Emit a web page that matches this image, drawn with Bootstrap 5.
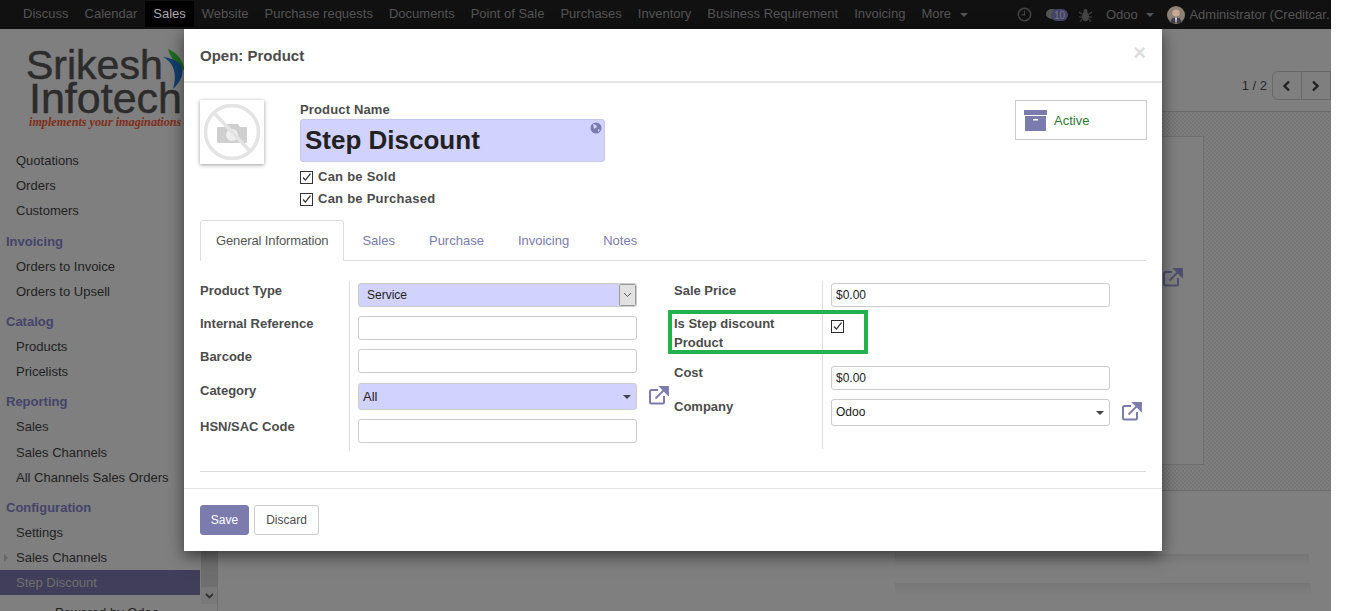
<!DOCTYPE html>
<html lang="en">
<head>
    <meta charset="UTF-8">
    <meta name="viewport" content="width=device-width, initial-scale=1.0">
    <title>Open: Product</title>
    <link href="https://cdn.jsdelivr.net/npm/bootstrap@5.3.0/dist/css/bootstrap.min.css" rel="stylesheet">
    <style>
        html, body { height: 611px; overflow: hidden; }
        body { background: #fff; font-family: "Liberation Sans", Arial, sans-serif; font-size: 13px; color: #4c4c4c; }

        /* page behind the dialog, colours already dimmed */
        .app-shell { width: 1331px; height: 611px; position: relative; overflow: hidden; background: #7f7f7f; color: #222; }
        .top-bar { height: 29px; background: #111; color: #555; white-space: nowrap; padding-left: 15px; }
        .top-item { padding: 0 8px; height: 26px; line-height: 26px; margin-top: 1px; }
        .top-item.on { background: #000; color: #aaa; }
        .top-right { margin-left: auto; width: 314px; flex: none; overflow: hidden; }
        .tb-gap-a { margin-left: 14px; }
        .tb-gap-b { margin-left: 11px; }
        .tb-gap-c { margin-left: 13px; }
        .caret-down { display: inline-block; width: 0; height: 0; border: 4px solid transparent; border-top-color: currentColor; border-bottom: 0; margin-left: 5px; vertical-align: middle; }

        .side-col { width: 218px; border-right: 1px solid #6e6e6e; height: 582px; flex: none; position: relative; }
        .side-scroll { width: 200px; flex: none; }
        .side-bar-track { width: 16px; height: 575px; background: #6e6e6e; position: relative; margin-left: 1px; flex: none; }
        .side-bar-btn { position: absolute; left: 0; bottom: 0; width: 16px; height: 17px; background: #797979; display: flex; align-items: center; justify-content: center; }
        .logo-box { height: 119px; padding: 19px 0 0 26px; position: relative; }
        .logo-big { line-height: 35px; color: #2c2c2c; -webkit-text-stroke: .5px #2c2c2c; white-space: nowrap; }
        .logo-a { font-size: 41px; }
        .logo-b { font-size: 43px; margin: -2px 0 0 3px; }
        .logo-sub { font-family: "Liberation Serif", serif; font-weight: bold; font-style: italic; font-size: 12.2px; line-height: 14px; color: #7f2c18; margin: -1px 0 0 3px; white-space: nowrap; }
        .logo-leaf { position: absolute; left: 163px; top: 20px; }
        .side-group { font-weight: bold; color: #45436a; padding-left: 6px; height: 25px; line-height: 25px; margin-top: 5px; }
        .side-link { padding-left: 16px; height: 25.2px; line-height: 25px; color: #222; position: relative; }
        .side-link.on { background: #403e5a; color: #6f6f6f; }
        .side-arrow { position: absolute; left: 4px; top: 9px; width: 0; height: 0; border: 4px solid transparent; border-left-color: #666; border-right: 0; }
        .side-foot { position: absolute; left: 55px; top: 574px; color: #222; white-space: nowrap; }

        .work-col { min-width: 0; }
        .panel-top { height: 83px; border-bottom: 1px solid #6b6b6b; padding: 42px 0 0 0; }
        .pager-text { margin-right: 5px; line-height: 29px; color: #2b2b2b; }
        .pager-btn { width: 29.5px; height: 29px; border: 1px solid #686868; background: #7f7f7f; display: flex; align-items: center; justify-content: center; }
        .sheet-zone { height: 379px; border-bottom: 1px solid #6b6b6b; padding: 24px 127px 25px 340px; background: conic-gradient(#767676 25%, #7f7f7f 0 50%, #767676 0 75%, #7f7f7f 0) 0 0 / 4px 4px; }
        .sheet-box { height: 100%; background: #7f7f7f; border: 1px solid #6e6e6e; padding: 131px 20px 0 0; }
        .chatter-line { height: 12px; margin-left: 677px; background: linear-gradient(#767676, #7f7f7f); }
        .chatter-a { margin-top: 63px; margin-right: 22px; }
        .chatter-b { margin-top: 17px; margin-right: 20px; }

        /* dialog */
        .dlg { position: absolute; left: 184px; top: 29px; width: 978px; height: 522px; background: #fff; border: 0; border-radius: 0; box-shadow: 0 5px 15px rgba(0, 0, 0, .55); color: #4c4c4c; }
        .dlg .modal-header { height: 54px; padding: 0 16px; border-bottom: 2px solid #e5e5e5; border-radius: 0; }
        .dlg-title { font-size: 15px; font-weight: bold; color: #4c4c4c; margin: 2px 0 0; line-height: 52px; }
        .dlg-close { border: 0; background: none; padding: 0; margin: -4px 0 0 auto; font-size: 22px; font-weight: bold; line-height: 1; color: #ddd; }
        .dlg .modal-body { padding: 17px 16px 16px; flex: none; }
        .dlg .modal-footer { padding: 16px; border-top: 1px solid #e5e5e5; gap: 5px; justify-content: flex-start; border-radius: 0; }
        .dlg .modal-footer > * { margin: 0; }

        .head-block { height: 120px; }
        .photo-box { width: 64px; height: 64px; box-shadow: 0 1px 4px rgba(0, 0, 0, .4); margin-right: 36px; flex: none; }
        .name-label { font-weight: bold; line-height: 18px; padding-top: 1px; height: 18px; letter-spacing: .15px; }
        .name-field { width: 305px; height: 43px; margin-top: 1px; background: #d2d2ff; border: 1px solid #c6c6e8; border-radius: 3px; font-size: 26px; font-weight: bold; color: #222; padding: 0 4px; line-height: 40px; position: relative; }
        .globe-mark { position: absolute; right: 2px; top: 2px; }
        .tick-row { height: 22px; font-weight: bold; gap: 5px; letter-spacing: .25px; }
        .name-field + .tick-row { margin-top: 3px; }
        .form-check-input.tick { width: 13px; height: 13px; margin: 0; border: 1px solid #333; border-radius: 0; flex: none; }
        .tick-row .form-check-input.tick { margin-top: 2px; }
        .form-check-input.tick:checked { background-color: #fff; border-color: #333; background-size: 11px; background-image: url("data:image/svg+xml,%3csvg xmlns='http://www.w3.org/2000/svg' viewBox='0 0 11 11'%3e%3cpath fill='none' stroke='%23333' stroke-width='1.3' d='M2 5.5l2.4 2.6L9.5 1.6'/%3e%3c/svg%3e"); }
        .tick-label { padding-top: 1px; }
        .form-check-input.tick.focused { outline: 1px dotted #222; outline-offset: -1px; margin-top: 4px; }
        .active-box { width: 132px; height: 40px; border: 1px solid #ccc; margin: 0 -1px 0 auto; gap: 7px; padding: 1px 0 0 8px; color: #2f7a36; flex: none; }

        .dlg-tabs { height: 41px; border-bottom: 1px solid #ddd; gap: 2px; }
        .dlg-tabs .nav-link { padding: 0 15px; height: 41px; line-height: 39px; color: #7c7bad; border-radius: 3px 3px 0 0; }
        .dlg-tabs .nav-link.active { color: #555; background: #fff; border-color: #ddd #ddd #fff; letter-spacing: -.01em; }

        .form-wrap { margin-top: 20px; height: 170px; }
        .form-left { width: 474px; flex: none; }
        .form-row-line { display: flex; }
        .f-label { font-weight: bold; line-height: 18px; flex: none; }
        .f-left-label { width: 149px; padding-top: 1px; }
        .f-right-label { width: 148px; line-height: 19px; }
        .f-value { border-left: 1px solid #ddd; padding: 2px 0 0 8px; display: flex; align-items: flex-start; flex-grow: 1; }
        .f-value-low { padding-top: 3px; }
        .rh-33 { height: 33px; }
        .rh-34 { height: 34px; }
        .rh-36 { height: 36px; }
        .rh-49 { height: 49px; }
        .rh-52 { height: 52px; }
        .f-control { flex: none; width: 279px; height: 24px; padding: 0 4px; font-size: 12px; color: #222; border: 1px solid #ccc; border-radius: 3px; background-color: #fff; line-height: 22px; box-shadow: none; }
        .f-control.req { background-color: #d2d2ff; }
        .f-tall { height: 27px; line-height: 25px; }
        .f-select { background-position: right 5px center; background-size: 8px 4px; background-image: url("data:image/svg+xml,%3csvg xmlns='http://www.w3.org/2000/svg' viewBox='0 0 8 4'%3e%3cpath fill='%23444' d='M0 0h8L4 4z'/%3e%3c/svg%3e"); }
        .f-native { padding-left: 8px; background-position: right 0 center; background-size: 17px 22px; background-image: url("data:image/svg+xml,%3csvg xmlns='http://www.w3.org/2000/svg' viewBox='0 0 17 22'%3e%3crect x='.5' y='.5' width='16' height='21' rx='1' fill='%23e1e1e1' stroke='%23999'/%3e%3cpath fill='none' stroke='%23555' d='M5 9l3.5 3.5L12 9'/%3e%3c/svg%3e"); }
        .f-big { font-size: 13px; }
        .link-mark { margin: 3px 0 0 12px; flex: none; }
        .hr-line { height: 1px; background: #ddd; margin: 20px 0 0; }

        .btn-save { background: #7c7bad; color: #fff; border: 1px solid #7c7bad; width: 49px; height: 30px; padding: 0; font-size: 12px; border-radius: 3px; }
        .btn-discard { background: #fff; color: #4c4c4c; border: 1px solid #ccc; width: 65px; height: 30px; padding: 0; font-size: 12px; border-radius: 3px; }

        .mark-box { position: absolute; left: 668px; top: 310px; width: 200px; height: 44px; border: 4px solid #22b14c; }
    </style>
</head>
<body>
    <div class="app-shell">
        <div class="top-bar d-flex">
            <div class="top-item">Discuss</div>
            <div class="top-item">Calendar</div>
            <div class="top-item on">Sales</div>
            <div class="top-item">Website</div>
            <div class="top-item">Purchase requests</div>
            <div class="top-item">Documents</div>
            <div class="top-item">Point of Sale</div>
            <div class="top-item">Purchases</div>
            <div class="top-item">Inventory</div>
            <div class="top-item">Business Requirement</div>
            <div class="top-item">Invoicing</div>
            <div class="top-item">More <span class="caret-down"></span></div>
            <div class="top-right d-flex align-items-center">
                <svg width="15" height="15" viewBox="0 0 15 15"><circle cx="7.5" cy="7.5" r="6.2" fill="none" stroke="#444" stroke-width="1.5"/><path d="M7.5 3.5v4.3H4.6" fill="none" stroke="#444" stroke-width="1.2"/></svg>
                <svg class="tb-gap-a" width="22" height="14" viewBox="0 0 22 14"><ellipse cx="6" cy="6" rx="6" ry="5" fill="#555"/><rect x="5" y="1" width="17" height="12" rx="6" fill="#45436a"/><text x="13.5" y="11" font-size="10" text-anchor="middle" fill="#777" font-family="Liberation Sans">10</text></svg>
                <svg class="tb-gap-b" width="13" height="14" viewBox="0 0 13 14"><ellipse cx="6.500" cy="8.500" rx="3.600" ry="5" fill="#444"/><circle cx="6.500" cy="3" r="2" fill="#444"/><path d="M0 4l3 2M13 4l-3 2M0 9h3M13 9h-3M1 14l2-3M12 14l-2-3" stroke="#444" stroke-width="1.100"/></svg>
                <span class="tb-gap-a">Odoo <span class="caret-down"></span></span>
                <svg class="tb-gap-c" width="18" height="18" viewBox="0 0 18 18"><circle cx="9" cy="9" r="9" fill="#8c8176"/><circle cx="9" cy="7" r="3.600" fill="#c9a995"/><path d="M3 17c1-5 3.500-5.500 6-5.500s5 .5 6 5.500z" fill="#3f3f45"/><path d="M8 11.500h2l-.5 5h-1z" fill="#ddd"/></svg>
                <span class="ms-1 text-nowrap">Administrator (Creditcar.</span>
            </div>
        </div>

        <div class="d-flex">
            <div class="side-col d-flex">
                <div class="side-scroll">
                    <div class="logo-box">
                        <div class="logo-big logo-a">Srikesh</div>
                        <div class="logo-big logo-b">Infotech</div>
                        <div class="logo-sub">implements your imaginations</div>
                        <svg class="logo-leaf" width="22" height="40" viewBox="0 0 22 40"><path d="M5 0c10 4 15 12 17 22-8-4-14-12-17-22z" fill="#1d6b1f"/><path d="M0 8c10 5 15 16 10 32 8-7 12-17 8-24C15 12 8 9 0 8z" fill="#123f6e"/></svg>
                    </div>
                    <div class="side-link">Quotations</div>
                    <div class="side-link">Orders</div>
                    <div class="side-link">Customers</div>
                    <div class="side-group">Invoicing</div>
                    <div class="side-link">Orders to Invoice</div>
                    <div class="side-link">Orders to Upsell</div>
                    <div class="side-group">Catalog</div>
                    <div class="side-link">Products</div>
                    <div class="side-link">Pricelists</div>
                    <div class="side-group">Reporting</div>
                    <div class="side-link">Sales</div>
                    <div class="side-link">Sales Channels</div>
                    <div class="side-link">All Channels Sales Orders</div>
                    <div class="side-group">Configuration</div>
                    <div class="side-link">Settings</div>
                    <div class="side-link"><span class="side-arrow"></span>Sales Channels</div>
                    <div class="side-link on">Step Discount</div>
                </div>
                <div class="side-bar-track">
                    <div class="side-bar-btn">
                        <svg width="9" height="6" viewBox="0 0 9 6"><path d="M1 1l3.500 3.500L8 1" fill="none" stroke="#333" stroke-width="1.800"/></svg>
                    </div>
                </div>
                <div class="side-foot">Powered by Odoo</div>
            </div>

            <div class="work-col flex-grow-1">
                <div class="panel-top d-flex justify-content-end">
                    <span class="pager-text">1 / 2</span>
                    <div class="pager-btn rounded-start">
                        <svg width="9" height="12" viewBox="0 0 9 12"><path d="M7 1.500L2.500 6 7 10.500" fill="none" stroke="#222" stroke-width="2.400"/></svg>
                    </div>
                    <div class="pager-btn border-start-0">
                        <svg width="9" height="12" viewBox="0 0 9 12"><path d="M2 1.500L6.500 6 2 10.500" fill="none" stroke="#222" stroke-width="2.400"/></svg>
                    </div>
                </div>
                <div class="sheet-zone">
                    <div class="sheet-box d-flex justify-content-end align-items-start">
                        <svg width="20" height="19" viewBox="0 0 20 19"><path d="M15 10v6a1.500 1.500 0 0 1-1.500 1.500h-11A1.500 1.500 0 0 1 1 16V5.500A1.500 1.500 0 0 1 2.500 4H9" fill="none" stroke="#4f4e6e" stroke-width="2"/><path d="M6.500 12.500L16 3M11.500 1H19v7.500z" fill="#4f4e6e" stroke="#4f4e6e" stroke-width="1.800"/></svg>
                    </div>
                </div>
                <div class="chatter-line chatter-a"></div>
                <div class="chatter-line chatter-b"></div>
            </div>
        </div>

        <div class="modal-content dlg">
            <div class="modal-header">
                <h4 class="dlg-title">Open: Product</h4>
                <button type="button" class="dlg-close">×</button>
            </div>
            <div class="modal-body">
                <div class="head-block d-flex align-items-start">
                    <div class="photo-box d-flex align-items-center justify-content-center">
                        <svg width="60" height="60" viewBox="0 0 60 60">
                            <path d="M16 25h6l2-3h12l2 3h6a1 1 0 0 1 1 1v14a1 1 0 0 1-1 1H16a1 1 0 0 1-1-1V26a1 1 0 0 1 1-1z" fill="#cfcfcf"/>
                            <circle cx="30" cy="33" r="6" fill="#eee"/>
                            <circle cx="30" cy="30" r="26.500" fill="none" stroke="#e4e4e4" stroke-width="3.500"/>
                            <path d="M12 11l36 38" stroke="#e4e4e4" stroke-width="3.500"/>
                        </svg>
                    </div>
                    <div>
                        <div class="name-label">Product Name</div>
                        <div class="name-field">Step Discount
                            <svg class="globe-mark" width="12" height="12" viewBox="0 0 12 12"><circle cx="6" cy="6" r="5.500" fill="#7c7bad"/><path d="M3 2l3 1 1 2-3 2zM8 7l2 1-2 2z" fill="#d2d2ff"/></svg>
                        </div>
                        <label class="tick-row d-flex align-items-center"><input class="form-check-input tick" type="checkbox" checked><span class="tick-label">Can be Sold</span></label>
                        <label class="tick-row d-flex align-items-center"><input class="form-check-input tick" type="checkbox" checked><span class="tick-label">Can be Purchased</span></label>
                    </div>
                    <div class="active-box d-flex align-items-center">
                        <svg width="23" height="21" viewBox="0 0 23 21"><rect width="23" height="5" fill="#7c7bad"/><rect x="1" y="6" width="21" height="15" fill="#7c7bad"/><rect x="9" y="9" width="5" height="1.500" fill="#fff"/></svg>
                        <span>Active</span>
                    </div>
                </div>

                <ul class="nav nav-tabs dlg-tabs">
                    <li class="nav-item"><a class="nav-link active" href="#">General Information</a></li>
                    <li class="nav-item"><a class="nav-link" href="#">Sales</a></li>
                    <li class="nav-item"><a class="nav-link" href="#">Purchase</a></li>
                    <li class="nav-item"><a class="nav-link" href="#">Invoicing</a></li>
                    <li class="nav-item"><a class="nav-link" href="#">Notes</a></li>
                </ul>

                <div class="form-wrap d-flex">
                    <div class="form-left">
                        <div class="form-row-line">
                            <div class="f-label f-left-label">Product Type</div>
                            <div class="f-value rh-33"><select class="form-select f-control req f-native"><option>Service</option></select></div>
                        </div>
                        <div class="form-row-line">
                            <div class="f-label f-left-label">Internal Reference</div>
                            <div class="f-value rh-33"><input class="form-control f-control" type="text"></div>
                        </div>
                        <div class="form-row-line">
                            <div class="f-label f-left-label">Barcode</div>
                            <div class="f-value rh-34"><input class="form-control f-control" type="text"></div>
                        </div>
                        <div class="form-row-line">
                            <div class="f-label f-left-label">Category</div>
                            <div class="f-value rh-36">
                                <select class="form-select f-control req f-select f-tall f-big"><option>All</option></select>
                                <svg class="link-mark" width="20" height="19" viewBox="0 0 20 19"><path d="M15 10v6a1.500 1.500 0 0 1-1.500 1.500h-11A1.500 1.500 0 0 1 1 16V5.500A1.500 1.500 0 0 1 2.500 4H9" fill="none" stroke="#7c7bad" stroke-width="2"/><path d="M6.500 12.500L16 3M11.500 1H19v7.500z" fill="#7c7bad" stroke="#7c7bad" stroke-width="1.800"/></svg>
                            </div>
                        </div>
                        <div class="form-row-line">
                            <div class="f-label f-left-label">HSN/SAC Code</div>
                            <div class="f-value rh-34"><input class="form-control f-control" type="text"></div>
                        </div>
                    </div>
                    <div class="flex-grow-1">
                        <div class="form-row-line">
                            <div class="f-label f-right-label">Sale Price</div>
                            <div class="f-value rh-33"><input class="form-control f-control" type="text" value="$0.00"></div>
                        </div>
                        <div class="form-row-line">
                            <div class="f-label f-right-label">Is Step discount<br>Product</div>
                            <div class="f-value rh-49"><input class="form-check-input tick focused" type="checkbox" checked></div>
                        </div>
                        <div class="form-row-line">
                            <div class="f-label f-right-label">Cost</div>
                            <div class="f-value f-value-low rh-34"><input class="form-control f-control" type="text" value="$0.00"></div>
                        </div>
                        <div class="form-row-line">
                            <div class="f-label f-right-label">Company</div>
                            <div class="f-value rh-52">
                                <select class="form-select f-control f-select f-tall"><option>Odoo</option></select>
                                <svg class="link-mark" width="20" height="19" viewBox="0 0 20 19"><path d="M15 10v6a1.500 1.500 0 0 1-1.500 1.500h-11A1.500 1.500 0 0 1 1 16V5.500A1.500 1.500 0 0 1 2.500 4H9" fill="none" stroke="#7c7bad" stroke-width="2"/><path d="M6.500 12.500L16 3M11.500 1H19v7.500z" fill="#7c7bad" stroke="#7c7bad" stroke-width="1.800"/></svg>
                            </div>
                        </div>
                    </div>
                </div>
                <div class="hr-line"></div>
            </div>
            <div class="modal-footer">
                <button type="button" class="btn btn-save">Save</button>
                <button type="button" class="btn btn-discard">Discard</button>
            </div>
        </div>

        <div class="mark-box"></div>
    </div>

    <script src="https://cdn.jsdelivr.net/npm/bootstrap@5.3.0/dist/js/bootstrap.bundle.min.js"></script>
</body>
</html>
